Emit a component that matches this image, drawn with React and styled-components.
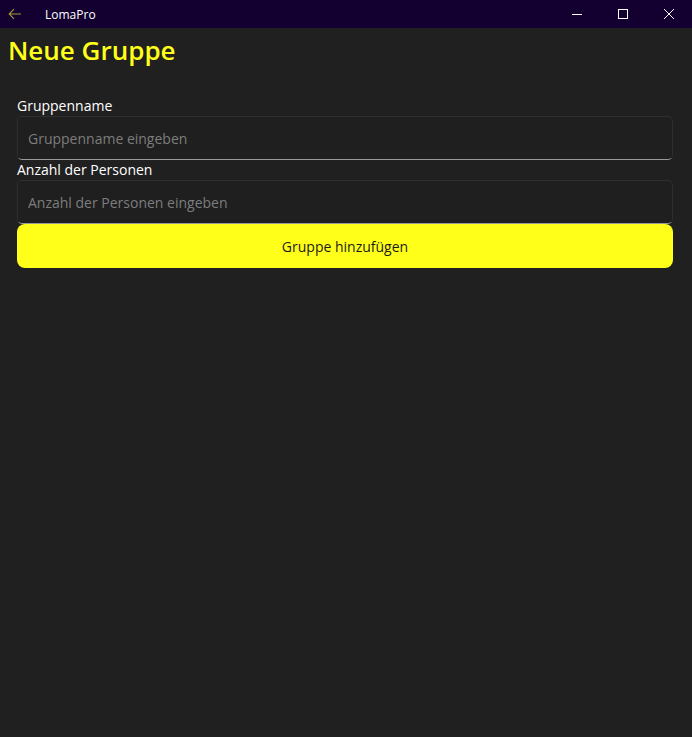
import React from 'react';
import styled, { createGlobalStyle } from 'styled-components';

const GlobalStyle = createGlobalStyle`
    html, body {
        margin: 0;
        padding: 0;
        background: #202020;
        font-family: 'Open Sans', 'Noto Sans', sans-serif;
    }
`;

// ***************** WINDOW *****************
const Window = styled.div`
    width: 692px;
    height: 737px;
    background: #202020;
    display: flex;
    flex-direction: column;
    overflow: hidden;
`;

// ***************** TITLE BAR *****************
const TitleBar = styled.div`
    height: 28px;
    background: #130030;
    display: flex;
    align-items: center;
`;

const BackButton = styled.div`
    width: 30px;
    height: 28px;
    display: flex;
    align-items: center;
    justify-content: center;
`;

const AppName = styled.span`
    margin-left: 15px;
    font-size: 12px;
    color: #ffffff;
    flex: 1;
`;

const Controls = styled.div`
    display: flex;
    height: 100%;
`;

const ControlButton = styled.div`
    width: 46px;
    height: 28px;
    display: flex;
    align-items: center;
    justify-content: center;
`;

// ***************** CONTENT *****************
const Content = styled.div`
    flex: 1;
    padding: 6px 19px 0 8px;
    display: flex;
    flex-direction: column;
`;

const Title = styled.h1`
    margin: 0;
    font-size: 26px;
    font-weight: 600;
    color: #ffff1a;
    line-height: 32px;
`;

const Form = styled.div`
    margin-top: 30px;
    padding-left: 9px;
    display: flex;
    flex-direction: column;
`;

const Label = styled.label`
    font-size: 14px;
    color: #ffffff;
    line-height: 20px;
`;

const Input = styled.input`
    box-sizing: border-box;
    height: 44px;
    width: 100%;
    padding: 0 10px;
    background: #1f1f1f;
    border: 1px solid #2f2f2f;
    border-bottom: 1px solid #9a9a9a;
    border-radius: 5px;
    font-family: 'Open Sans', sans-serif;
    font-size: 14px;
    color: #ffffff;
    outline: none;

    &::placeholder {
        color: #7d7d7d;
    }
`;

const Button = styled.button`
    box-sizing: border-box;
    height: 44px;
    width: 100%;
    background: #ffff1a;
    border: none;
    border-radius: 8px;
    font-family: 'Open Sans', sans-serif;
    font-size: 14px;
    color: #1b1b1b;
`;

function App() {
    return (
        <>
            <GlobalStyle />
            <Window>
                <TitleBar>
                    <BackButton>
                        <svg width="14" height="12" viewBox="0 0 14 12">
                            <path d="M13 6H1.5M6 1.2L1.2 6 6 10.8" fill="none" stroke="#a8963c" strokeWidth="1.1" />
                        </svg>
                    </BackButton>
                    <AppName>LomaPro</AppName>
                    <Controls>
                        <ControlButton>
                            <svg width="10" height="10" viewBox="0 0 10 10">
                                <path d="M0 5.5H10" stroke="#ffffff" strokeWidth="1" />
                            </svg>
                        </ControlButton>
                        <ControlButton>
                            <svg width="10" height="10" viewBox="0 0 10 10">
                                <rect x="0.5" y="0.5" width="9" height="9" fill="none" stroke="#ffffff" strokeWidth="1" />
                            </svg>
                        </ControlButton>
                        <ControlButton>
                            <svg width="10" height="10" viewBox="0 0 10 10">
                                <path d="M0 0L10 10M10 0L0 10" stroke="#ffffff" strokeWidth="1" />
                            </svg>
                        </ControlButton>
                    </Controls>
                </TitleBar>

                <Content>
                    <Title>Neue Gruppe</Title>
                    <Form>
                        <Label>Gruppenname</Label>
                        <Input placeholder="Gruppenname eingeben" />
                        <Label>Anzahl der Personen</Label>
                        <Input placeholder="Anzahl der Personen eingeben" />
                        <Button>Gruppe hinzufügen</Button>
                    </Form>
                </Content>
            </Window>
        </>
    );
}

export default App;
